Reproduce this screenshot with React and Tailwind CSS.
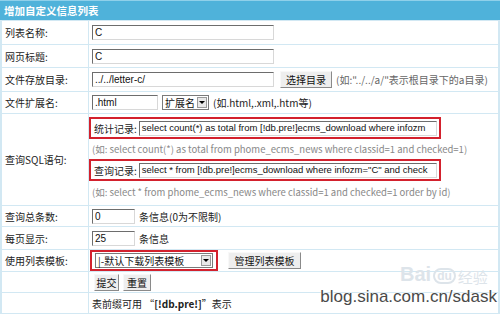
import React from "react";

const CJK = { fontFamily: '"Noto Sans CJK SC", "Liberation Sans", sans-serif' };

function Input({ w, value, className = "", size = "text-[10px]" }) {
  return (
    <div
      className={`h-[15px] bg-white border border-t-[#6d6d6d] border-l-[#6d6d6d] border-r-[#d8d8d8] border-b-[#d8d8d8] flex items-center pl-[2px] overflow-hidden whitespace-nowrap text-[#111] ${size} ${w} ${className}`}
      style={{ fontFamily: '"Liberation Sans", "Noto Sans CJK SC", sans-serif' }}
    >
      {value}
    </div>
  );
}

function Btn({ children, className = "" }) {
  return (
    <div
      className={`h-[17px] flex items-center justify-center whitespace-nowrap bg-[#eeeeee] border border-t-[#f8f8f8] border-l-[#f8f8f8] border-r-[#8a8a8a] border-b-[#8a8a8a] text-[10px] text-[#111] ${className}`}
    >
      {children}
    </div>
  );
}

function Row({ label, h, children }) {
  return (
    <div className="flex gap-px">
      <div className={`w-[86px] bg-white flex items-center pl-[3px] text-[10px] text-[#222] ${h}`}>{label}</div>
      <div className={`flex-1 bg-white flex items-center pl-[3px] whitespace-nowrap ${h}`}>{children}</div>
    </div>
  );
}

function Arrow() {
  return (
    <span className="ml-auto mr-px w-[10px] h-[11px] bg-[#e8e8e8] border border-[#9a9a9a] flex items-center justify-center">
      <span className="block w-0 h-0 border-l-[3px] border-r-[3px] border-t-[3px] border-l-transparent border-r-transparent border-t-black" />
    </span>
  );
}

export default function App() {
  return (
    <div className="relative w-[500px] h-[314px] overflow-hidden bg-[#d2e8f3]" style={CJK}>
      <div className="h-[20px] bg-[#4fb2da] border-t border-[#8fd0ea] flex items-center pl-[4px] text-[10.5px] font-bold text-white">
        增加自定义信息列表
      </div>
      <div className="flex flex-col gap-px pl-[2px] pr-[2px] pt-px">
        <Row label="列表名称:" h="h-[23px]">
          <Input w="w-[182px]" value="C" />
        </Row>
        <Row label="网页标题:" h="h-[22px]">
          <Input w="w-[182px]" value="C" />
        </Row>
        <Row label="文件存放目录:" h="h-[23px]">
          <Input w="w-[182px]" value="../../letter-c/" />
          <Btn className="ml-[6px] w-[52px]">选择目录</Btn>
          <span className="ml-[4px] text-[10px] text-[#666]">(如:"../../a/"表示根目录下的a目录)</span>
        </Row>
        <Row label="文件扩展名:" h="h-[21px]">
          <Input w="w-[66px]" value=".html" />
          <div className="ml-[4px] h-[15px] w-[47px] bg-white border border-[#7a7a7a] flex items-center pl-[2px] text-[10px] text-[#111]">
            扩展名
            <Arrow />
          </div>
          <span className="ml-[4px] text-[10px] text-[#222]">(如.html,.xml,.htm等)</span>
        </Row>
        <div className="flex gap-px">
          <div className="w-[86px] bg-white flex items-center pl-[3px] text-[10px] text-[#222] h-[91px]">查询SQL语句:</div>
          <div className="flex-1 bg-white h-[91px] flex flex-col pt-[3px]">
            <div className="w-[352px] h-[22px] border-2 border-[#d3212d] flex items-center pl-[3px] pr-[2px]">
              <span className="text-[10px] text-[#222] whitespace-nowrap">统计记录:</span>
              <Input w="flex-1" size="text-[9.5px]" className="ml-[2px]" value="select count(*) as total from [!db.pre!]ecms_download where infozm" />
            </div>
            <div className="h-[20px] flex items-center pl-[3px] text-[9.5px] text-[#888] whitespace-nowrap">
              (如: select count(*) as total from phome_ecms_news where classid=1 and checked=1)
            </div>
            <div className="w-[352px] h-[22px] border-2 border-[#d3212d] flex items-center pl-[3px] pr-[2px]">
              <span className="text-[10px] text-[#222] whitespace-nowrap">查询记录:</span>
              <Input w="flex-1" size="text-[9.5px]" className="ml-[2px]" value={'select * from [!db.pre!]ecms_download where infozm="C" and check'} />
            </div>
            <div className="h-[22px] flex items-center pl-[3px] text-[9.5px] text-[#888] whitespace-nowrap">
              (如: select * from phome_ecms_news where classid=1 and checked=1 order by id)
            </div>
          </div>
        </div>
        <Row label="查询总条数:" h="h-[20px]">
          <Input w="w-[43px]" value="0" />
          <span className="ml-[4px] text-[10px] text-[#222]">条信息(0为不限制)</span>
        </Row>
        <Row label="每页显示:" h="h-[22px]">
          <Input w="w-[43px]" value="25" />
          <span className="ml-[4px] text-[10px] text-[#222]">条信息</span>
        </Row>
        <Row label="使用列表模板:" h="h-[21px]">
          <div className="-ml-[2px] h-[21px] w-[128px] border-2 border-[#d3212d] flex items-center pl-[3px] pr-[3px]">
            <div className="flex-1 h-[15px] bg-white border border-[#7a7a7a] flex items-center pl-[2px] text-[10px] text-[#111]">
              |-默认下载列表模板
              <Arrow />
            </div>
          </div>
          <Btn className="ml-[10px] w-[73px]">管理列表模板</Btn>
        </Row>
        <Row label="" h="h-[20px]">
          <Btn className="ml-[2px] w-[25px]">提交</Btn>
          <Btn className="ml-[4px] w-[28px]">重置</Btn>
        </Row>
        <Row label="" h="h-[20px]">
          <span className="text-[10px] text-[#222]">
            表前缀可用 “<b>[!db.pre!]</b>”表示
          </span>
        </Row>
      </div>
      <div className="absolute left-[400px] top-[264px] flex items-end gap-[2px] text-[#dde4ea] select-none">
        <span className="text-[20px] leading-none font-bold" style={{ fontFamily: '"Liberation Sans", sans-serif' }}>Bai</span>
        <span className="text-[12px] leading-none font-bold border-2 border-[#dde4ea] rounded-full px-[2px]" style={{ fontFamily: '"Liberation Sans", sans-serif' }}>du</span>
        <span className="text-[15px] leading-none">经验</span>
      </div>
      <div
        className="absolute right-[3px] top-[288px] text-[17px] leading-none text-[#4a4a4a]"
        style={{ fontFamily: '"Liberation Sans", sans-serif', textShadow: "0 0 2px #fff, 0 0 2px #fff, 1px 1px 0 #fff" }}
      >
        blog.sina.com.cn/sdask
      </div>
    </div>
  );
}
